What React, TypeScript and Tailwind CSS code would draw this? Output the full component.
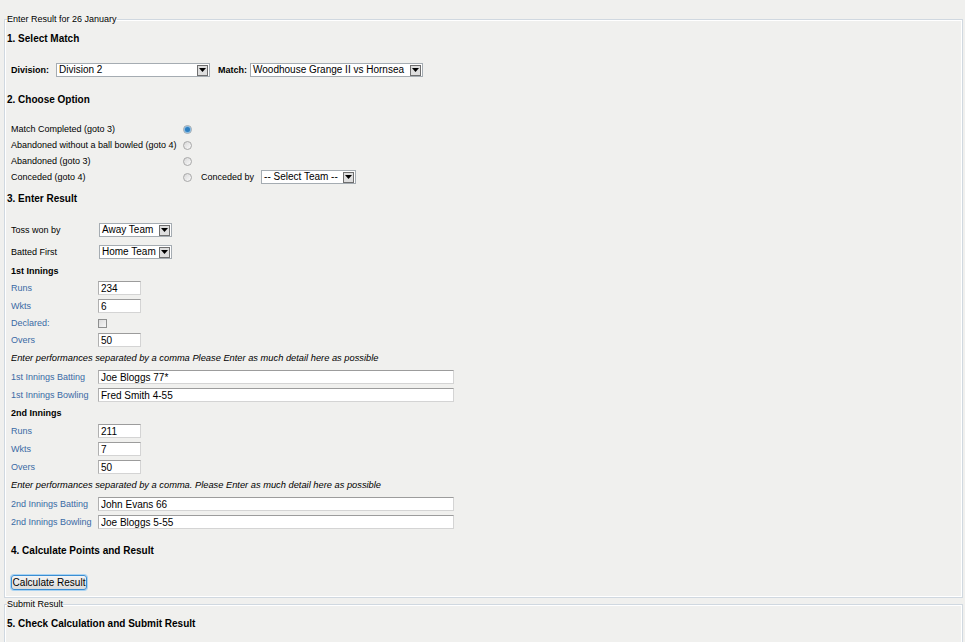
import React from 'react'

// small native-looking form bits (XP era look)

function Select({ value, className }: { value: string; className: string }) {
  return (
    <div className={'flex h-[14px] items-center border border-[#a5acb2] bg-white ' + className}>
      <span className="flex-1 truncate pl-[2px] text-[10px] leading-none text-black">{value}</span>
      <span className="mr-[1px] flex h-[11px] w-[11px] items-center justify-center border border-[#6f6f6f] bg-[#dedede]">
        <svg width="7" height="4" viewBox="0 0 7 4">
          <path d="M0 0h7L3.5 4z" fill="#000" />
        </svg>
      </span>
    </div>
  )
}

function Radio({ checked }: { checked?: boolean }) {
  return (
    <span className="flex h-[9px] w-[9px] items-center justify-center rounded-full border border-[#a8a8a8] bg-gradient-to-br from-[#d8d8d8] to-[#fafafa]">
      {checked && <span className="h-[5px] w-[5px] rounded-full bg-[#2d7fc1] shadow-[0_0_1px_1px_#7fb6e0]" />}
    </span>
  )
}

function TextInput({ value, className }: { value: string; className: string }) {
  return (
    <input
      readOnly
      defaultValue={value}
      className={
        'h-[14px] border border-[#d4d4d4] border-t-[#9c9c9c] border-l-[#b0b0b0] bg-white px-[2px] text-[10px] leading-none text-black outline-none ' +
        className
      }
    />
  )
}

function Field({ label, blue, h, children }: { label: string; blue?: boolean; h: string; children?: React.ReactNode }) {
  return (
    <div className={'ml-[4px] flex items-center ' + h}>
      <span className={'w-[87px] shrink-0 ' + (blue ? 'text-[#3a6aa5]' : 'text-black')}>{label}</span>
      {children}
    </div>
  )
}

export default function App() {
  const radios = [
    { label: 'Match Completed (goto 3)', checked: true },
    { label: 'Abandoned without a ball bowled (goto 4)' },
    { label: 'Abandoned (goto 3)' },
    { label: 'Conceded (goto 4)', conceded: true }
  ]

  return (
    <div className="h-screen overflow-hidden bg-[#f0f0ee] pt-[14px] font-['Liberation_Sans',Arial,sans-serif] text-[9px] leading-[11px] text-black">
      {/* Enter Result */}
      <fieldset className="ml-[4px] w-[959px] border border-[#d0d8e0] px-[2px] shadow-[inset_1px_1px_0_#fff,inset_-1px_-1px_0_#fff]">
        <legend className="p-0 text-[9px] leading-[11px]">Enter Result for 26 January</legend>

        <div className="flex h-[27px] items-center text-[10px] font-bold">1. Select Match</div>

        <div className="ml-[4px] flex h-[36px] items-center">
          <span className="mr-[7px] font-bold">Division:</span>
          <Select value="Division 2" className="w-[154px]" />
          <span className="ml-[8px] mr-[3px] font-bold">Match:</span>
          <Select value="Woodhouse Grange II vs Hornsea" className="w-[173px]" />
        </div>

        <div className="flex h-[22px] items-center text-[10px] font-bold">2. Choose Option</div>

        <div className="pt-[11px]">
          {radios.map((r) => (
            <div key={r.label} className="ml-[4px] flex h-[16px] items-center">
              <span className="w-[172px] shrink-0">{r.label}</span>
              <Radio checked={r.checked} />
              {r.conceded && (
                <>
                  <span className="ml-[9px] mr-[7px]">Conceded by</span>
                  <Select value="-- Select Team --" className="w-[95px]" />
                </>
              )}
            </div>
          ))}
        </div>

        <div className="flex h-[26px] items-center text-[10px] font-bold">3. Enter Result</div>

        <div className="pt-[8px]">
          <Field label="Toss won by" h="h-[22px]">
            <Select value="Away Team" className="ml-[1px] w-[73px]" />
          </Field>
          <Field label="Batted First" h="h-[22px]">
            <Select value="Home Team" className="ml-[1px] w-[73px]" />
          </Field>

          <div className="ml-[4px] flex h-[16px] items-center font-bold">1st Innings</div>
          <Field label="Runs" blue h="h-[18px]">
            <TextInput value="234" className="w-[43px]" />
          </Field>
          <Field label="Wkts" blue h="h-[18px]">
            <TextInput value="6" className="w-[43px]" />
          </Field>
          <Field label="Declared:" blue h="h-[16px]">
            <span className="h-[9px] w-[9px] border border-[#8e8f8f] bg-gradient-to-br from-[#dcdcdc] to-[#f6f6f6]" />
          </Field>
          <Field label="Overs" blue h="h-[18px]">
            <TextInput value="50" className="w-[43px]" />
          </Field>

          <div className="ml-[4px] flex h-[19px] items-center text-[9.3px] italic">
            Enter performances separated by a comma Please Enter as much detail here as possible
          </div>
          <Field label="1st Innings Batting" blue h="h-[18px]">
            <TextInput value="Joe Bloggs 77*" className="w-[356px]" />
          </Field>
          <Field label="1st Innings Bowling" blue h="h-[18px]">
            <TextInput value="Fred Smith 4-55" className="w-[356px]" />
          </Field>

          <div className="ml-[4px] flex h-[18px] items-center font-bold">2nd Innings</div>
          <Field label="Runs" blue h="h-[18px]">
            <TextInput value="211" className="w-[43px]" />
          </Field>
          <Field label="Wkts" blue h="h-[18px]">
            <TextInput value="7" className="w-[43px]" />
          </Field>
          <Field label="Overs" blue h="h-[18px]">
            <TextInput value="50" className="w-[43px]" />
          </Field>

          <div className="ml-[4px] flex h-[19px] items-center text-[9.3px] italic">
            Enter performances separated by a comma. Please Enter as much detail here as possible
          </div>
          <Field label="2nd Innings Batting" blue h="h-[18px]">
            <TextInput value="John Evans 66" className="w-[356px]" />
          </Field>
          <Field label="2nd Innings Bowling" blue h="h-[18px]">
            <TextInput value="Joe Bloggs 5-55" className="w-[356px]" />
          </Field>

          <div className="ml-[4px] flex h-[38px] items-center text-[10px] font-bold">4. Calculate Points and Result</div>

          <div className="ml-[4px] pb-[7px] pt-[6px]">
            <button className="flex h-[15px] w-[76px] items-center justify-center rounded-[3px] border border-[#3a8ed3] bg-gradient-to-b from-[#f4f4f4] to-[#dcdcdc] text-[10px] leading-none text-black shadow-[0_0_0_1px_#a9d3f2]">
              Calculate Result
            </button>
          </div>
        </div>
      </fieldset>

      {/* Submit Result */}
      <fieldset className="ml-[4px] mt-[1px] w-[959px] border border-[#d0d8e0] px-[2px] shadow-[inset_1px_1px_0_#fff,inset_-1px_-1px_0_#fff]">
        <legend className="p-0 text-[9px] leading-[11px]">Submit Result</legend>
        <div className="flex h-[26px] items-center text-[10px] font-bold">5. Check Calculation and Submit Result</div>
        <div className="h-[40px]" />
      </fieldset>
    </div>
  )
}
